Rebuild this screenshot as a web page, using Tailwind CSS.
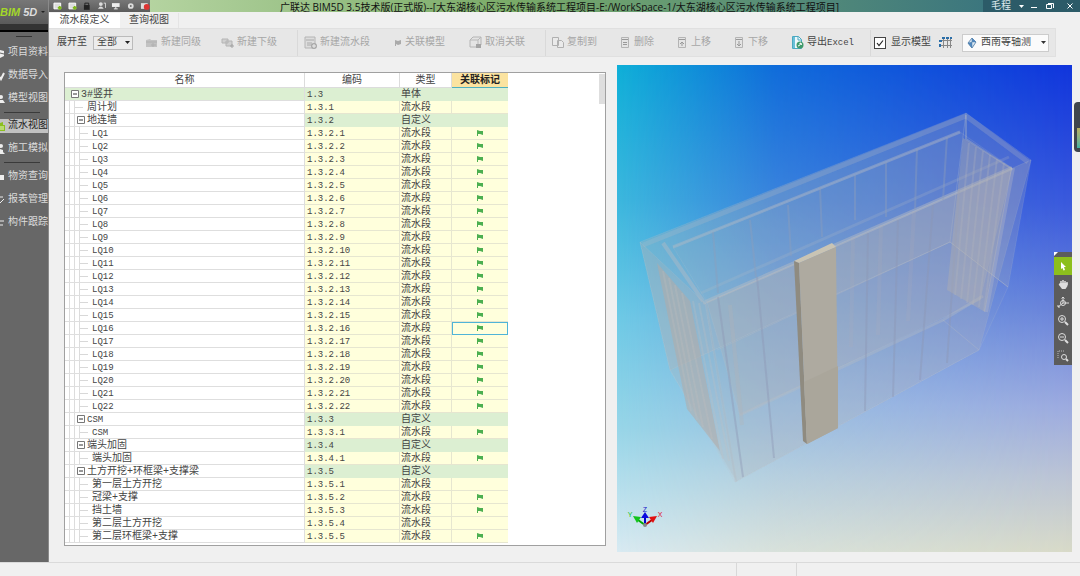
<!DOCTYPE html>
<html lang="zh-CN">
<head>
    <meta charset="UTF-8">
    <meta name="viewport" content="width=device-width, initial-scale=1.0">
    <title>广联达 BIM5D 3.5技术版</title>
    <script src="https://cdn.jsdelivr.net/npm/@tailwindcss/browser@4"></script>
</head>
<body class="bg-[#f0f0f0] font-['Liberation_Mono','Noto_Sans_CJK_SC',monospace] text-[10px] leading-3 text-[#444]">
    <div class="min-h-screen flex flex-col">
        <div class="flex-1 flex">

            <!-- 左侧导航 -->
            <aside class="w-12 shrink-0 overflow-hidden bg-[#676767] text-[#dcdcdc]">
                <div class="h-6 flex items-center gap-1 bg-linear-to-b from-[#777] to-[#5a5a5a] font-['Liberation_Sans',sans-serif] text-[11px] font-bold italic">
                    <span class="whitespace-nowrap"><span class="text-[#a4d82a]">BIM</span> <span class="text-[#ddd]">5D</span></span>
                    <svg class="w-1 h-1 shrink-0" viewBox="0 0 4 4"><path d="M0 1h4L2 3z" fill="#222"/></svg>
                </div>
                <div class="h-2 bg-[#333] border-b-2 border-black"></div>
                <div class="mx-4 mt-1 border-t border-[#333]"></div>
                <nav class="pt-1">
                    <a href="#" class="h-[23px] flex items-center gap-[3px] whitespace-nowrap">
                        <svg class="w-[5px] h-3 shrink-0" viewBox="0 0 5 12"><path d="M0 3l4 1v5l-4 2z" fill="#eee"/><path d="M0 6l4 1" stroke="#666"/></svg>项目资料</a>
                    <a href="#" class="h-[23px] flex items-center gap-[3px] whitespace-nowrap">
                        <svg class="w-[5px] h-3 shrink-0" viewBox="0 0 5 12"><path d="M0 7l1 2 3-6" fill="none" stroke="#eee" stroke-width="2"/></svg>数据导入</a>
                    <a href="#" class="h-[23px] flex items-center gap-[3px] whitespace-nowrap">
                        <svg class="w-[5px] h-3 shrink-0" viewBox="0 0 5 12"><circle cx="1" cy="4" r="2" fill="#eee"/><path d="M0 7h3l2 3H0z" fill="#eee"/></svg>模型视图</a>
                    <div class="ml-1 mr-2 my-[2px] border-t border-[#3a3a3a]"></div>
                    <a href="#" class="h-[14px] my-[6px] flex items-center gap-[3px] whitespace-nowrap bg-[#c2c2c2] text-[#222]">
                        <svg class="w-[5px] h-3 shrink-0" viewBox="0 0 5 12"><path d="M0 3l3-1v3h2v6H0z" fill="#8bbf1f"/><path d="M1 6v4M3 6v4" stroke="#e8f5c8"/></svg>流水视图</a>
                    <a href="#" class="h-[19px] flex items-center gap-[3px] whitespace-nowrap">
                        <svg class="w-[5px] h-3 shrink-0" viewBox="0 0 5 12"><circle cx="1" cy="3" r="2" fill="#eee"/><path d="M0 6l3 1v2l2 2H0z" fill="#eee"/></svg>施工模拟</a>
                    <div class="ml-1 mr-2 mt-1 mb-[2px] border-t border-[#3a3a3a]"></div>
                    <a href="#" class="h-[23px] flex items-center gap-[3px] whitespace-nowrap">
                        <svg class="w-[5px] h-3 shrink-0" viewBox="0 0 5 12"><path d="M0 4h4v5H0z" fill="#eee"/></svg>物资查询</a>
                    <a href="#" class="h-[23px] flex items-center gap-[3px] whitespace-nowrap">
                        <svg class="w-[5px] h-3 shrink-0" viewBox="0 0 5 12"><path d="M0 3h3M0 9l4-4" stroke="#eee" fill="none"/></svg>报表管理</a>
                    <a href="#" class="h-[23px] flex items-center gap-[3px] whitespace-nowrap">
                        <svg class="w-[5px] h-3 shrink-0" viewBox="0 0 5 12"><path d="M0 4h4M0 8h3" stroke="#eee" fill="none"/></svg>构件跟踪</a>
                </nav>
            </aside>

            <div class="flex-1 min-w-0 flex flex-col border-l border-[#8a8a8a]">

                <!-- 标题栏 -->
                <header class="h-3 flex items-center bg-linear-to-r from-[#c5dfb0] via-[#7aab68] via-45% to-[#2f6b80] overflow-hidden">
                    <div class="w-[101px] h-3 shrink-0 flex items-center gap-[5px] pl-1 bg-linear-to-b from-[#777] to-[#5c5c5c]">
                        <svg class="w-[10px] h-[10px]" viewBox="0 0 10 10"><path d="M1 2h7v6H1z" fill="#ddd" stroke="#fff"/><path d="M5 7h4M7 5v4" stroke="#7db81a" stroke-width="2"/></svg>
                        <svg class="w-[10px] h-[10px]" viewBox="0 0 10 10"><path d="M1 2h7v6H1z" fill="#ddd" stroke="#fff"/><path d="M5 7h4M7 5v4" stroke="#7db81a" stroke-width="2"/></svg>
                        <svg class="w-[10px] h-[10px]" viewBox="0 0 10 10"><path d="M2 4h6v5H2z" fill="#222"/><path d="M3 4V2h4v2" fill="none" stroke="#222"/></svg>
                        <svg class="w-[10px] h-[10px]" viewBox="0 0 10 10"><circle cx="4" cy="3" r="2" fill="#ddd"/><path d="M1 8q3-5 6 0z" fill="#ddd"/><path d="M7 2h2v5" stroke="#ddd" fill="none"/></svg>
                        <svg class="w-[10px] h-[10px]" viewBox="0 0 10 10"><path d="M1 2h8v4H1z" fill="#eee"/><path d="M3 8h4M5 6v2" stroke="#eee"/></svg>
                        <svg class="w-[10px] h-[10px]" viewBox="0 0 10 10"><circle cx="5" cy="5" r="2" fill="none" stroke="#ddd" stroke-width="2"/></svg>
                        <svg class="w-[10px] h-[10px]" viewBox="0 0 10 10"><path d="M1 2h7v6H1z" fill="#ddd"/><circle cx="7" cy="6" r="3" fill="#d33"/></svg>
                    </div>
                    <h1 class="flex-1 pt-px pr-3.5 text-center whitespace-nowrap text-[#111] font-['Open_Sans','Noto_Sans_CJK_SC',sans-serif]">广联达 BIM5D 3.5技术版(正式版)--[大东湖核心区污水传输系统工程项目-E:/WorkSpace-1/大东湖核心区污水传输系统工程项目]</h1>
                    <div class="w-[97px] h-3 shrink-0 flex items-center pl-2 bg-[#2c5b68] text-[#dce8ec]">
                        <span class="pt-px">毛程</span>
                        <svg class="ml-2 w-[5px] h-[5px]" viewBox="0 0 5 5"><path d="M0 1h5L2.500 4z" fill="#fff"/></svg>
                        <button type="button" aria-label="最小化" class="ml-[6px]"><svg class="w-2 h-2" viewBox="0 0 8 8"><path d="M1 5.500h6" stroke="#fff"/></svg></button>
                        <button type="button" aria-label="还原" class="ml-2"><svg class="w-2 h-2" viewBox="0 0 8 8"><path d="M.5 2.500h5v4h-5zM2 1.500h5.500V6" fill="none" stroke="#fff"/></svg></button>
                        <button type="button" aria-label="关闭" class="ml-3"><svg class="w-2 h-2" viewBox="0 0 8 8"><path d="M1.500 1.500l5 5M6.500 1.500l-5 5" stroke="#fff" fill="none"/></svg></button>
                    </div>
                </header>

                <!-- 页签 -->
                <div class="flex pt-px">
                    <button type="button" class="w-[71px] h-[15px] bg-white">流水段定义</button>
                    <button type="button" class="w-[59px] h-[15px] border-r border-[#e4e4e4]">查询视图</button>
                </div>

                <!-- 工具栏 -->
                <div class="h-[29px] flex items-center pl-2 mr-6 border border-l-0 border-[#e0e0e0] bg-[#e7e7e7] text-[#a6a6a6] whitespace-nowrap">
                    <label for="level" class="text-[#444]">展开至</label>
                    <div class="relative ml-[6px]">
                        <select id="level" class="block appearance-none w-10 h-[14px] pl-[3px] border border-[#bbb] bg-[#ececec] text-[#444]">
                            <option>全部</option>
                        </select>
                        <svg class="absolute right-[3px] top-1 w-[5px] h-[5px] pointer-events-none" viewBox="0 0 5 5"><path d="M0 1h5L2.500 4z" fill="#222"/></svg>
                    </div>
                    <div class="flex gap-5 ml-3 pr-5">
                        <button type="button" class="flex items-center gap-[3px]">
                            <svg class="w-[13px] h-[13px]" viewBox="0 0 13 13"><path d="M1 4l4-1 1 1h6v7H1z" fill="#c2c2c2"/><path d="M1 6h11M8 7v4M6 9h5" stroke="#b0b0b0"/></svg>新建同级</button>
                        <button type="button" class="flex items-center gap-[3px]">
                            <svg class="w-[13px] h-[13px]" viewBox="0 0 13 13"><path d="M1 3h6v4H1zM5 5h6v5H5z" fill="#d0d0d0" stroke="#b4b4b4"/><path d="M9 10h4M11 8v4" stroke="#a4a4a4"/></svg>新建下级</button>
                    </div>
                    <div class="h-[26px] flex items-center gap-6 border-l border-[#d9d9d9] pl-[6px] pr-5">
                        <button type="button" class="flex items-center gap-[3px]">
                            <svg class="w-[13px] h-[13px]" viewBox="0 0 13 13"><path d="M1 1h10v11H1z" fill="#ddd" stroke="#b4b4b4"/><path d="M2 4h8M3 7h5M3 9h5" stroke="#aaa"/><circle cx="10" cy="10" r="3" fill="#a8a8a8"/><path d="M8 10h4M10 8v4" stroke="#eee"/></svg>新建流水段</button>
                        <button type="button" class="flex items-center gap-[3px]">
                            <svg class="w-2 h-[13px]" viewBox="0 0 8 13"><path d="M1 4l3 1 3-1v4L4 9 2 8v2H1z" fill="#aaa"/></svg>关联模型</button>
                        <button type="button" class="flex items-center gap-[3px]">
                            <svg class="w-[13px] h-[13px]" viewBox="0 0 13 13"><path d="M1 4l3-3h8v8l-3 2H1z" fill="#e4e4e4" stroke="#b4b4b4"/><path d="M1 4h8v7M9 4l3-3" fill="none" stroke="#b8b8b8"/><path d="M7 8h5v4H7z" fill="#a4a4a4"/></svg>取消关联</button>
                    </div>
                    <div class="h-[26px] flex items-center gap-6 border-l border-[#d9d9d9] pl-[6px] pr-4">
                        <button type="button" class="flex items-center gap-[3px]">
                            <svg class="w-3 h-[13px]" viewBox="0 0 12 13"><path d="M.5 1.500h6v8h-6zM5.500 4.500h4l2 2v5h-6z" fill="#eaeaea" stroke="#b0b0b0"/></svg>复制到</button>
                        <button type="button" class="flex items-center gap-[5px]">
                            <svg class="w-2 h-[13px]" viewBox="0 0 8 13"><path d="M.5 1.500h7v10h-7z" fill="#e4e4e4" stroke="#b4b4b4"/><path d="M1 3.500h6M2 6.500h4M2 8.500h4" stroke="#999"/></svg>删除</button>
                        <button type="button" class="flex items-center gap-[5px]">
                            <svg class="w-2 h-[13px]" viewBox="0 0 8 13"><path d="M.5 1.500h7v10h-7z" fill="#e4e4e4" stroke="#b4b4b4"/><path d="M1 3.500h6M4 10V6M2 8l2-2 2 2" fill="none" stroke="#999"/></svg>上移</button>
                        <button type="button" class="flex items-center gap-[5px]">
                            <svg class="w-2 h-[13px]" viewBox="0 0 8 13"><path d="M.5 1.500h7v10h-7z" fill="#e4e4e4" stroke="#b4b4b4"/><path d="M1 3.500h6M4 5v4M2 8l2 2 2-2" fill="none" stroke="#999"/></svg>下移</button>
                        <button type="button" class="flex items-center gap-[3px] text-[#444]">
                            <svg class="w-3 h-[13px]" viewBox="0 0 12 13"><path d="M.5.500h6l3 3v9h-9z" fill="#eef8fb" stroke="#4aa8c0"/><path d="M1 1h2v11H1z" fill="#69c0d8"/><path d="M6 .5v3.500h3.500" fill="none" stroke="#4aa8c0"/><circle cx="8" cy="9" r="3.500" fill="#3f9a6a"/><path d="M6 10q2 0 3-3M7.500 7.500L9 7l.5 2" stroke="#fff" fill="none"/></svg>
                            <span>导出<span class="text-[9px]">Excel</span></span></button>
                    </div>
                    <div class="h-[26px] flex items-center border-l border-[#d9d9d9] pl-[3px] text-[#444]">
                        <div class="relative">
                            <input id="showModel" type="checkbox" checked class="block appearance-none w-3 h-3 border border-[#444] bg-white">
                            <svg class="absolute inset-0 w-3 h-3 pointer-events-none" viewBox="0 0 12 12"><path d="M3 6l2 2.500 4-5" fill="none" stroke="#222" stroke-width="1.200"/></svg>
                        </div>
                        <label for="showModel" class="ml-[5px]">显示模型</label>
                        <button type="button" aria-label="轴网" class="ml-2"><svg class="block w-[13px] h-[13px]" viewBox="0 0 13 13"><path d="M2 4.500h11M1 9.500h12M4.500 2v10M8.500 2v10M11.500 2v10" stroke="#888"/><path d="M3 1h3v2H3zM7 1h3v2H7zM11 1h2v2h-2zM0 4h3v2H0zM0 8h2v3H0z" fill="#2b6ea8"/></svg></button>
                        <div class="relative ml-[10px]">
                            <select aria-label="视角" class="block appearance-none w-[87px] h-[18px] pl-[18px] border border-[#ccc] bg-[#fbfbfb] text-[#444]">
                                <option>西南等轴测</option>
                            </select>
                            <svg class="absolute left-1 top-[3px] w-3 h-3 pointer-events-none" viewBox="0 0 12 12"><path d="M6 1l4 4-4 6-4-5z" fill="#dce9f4" stroke="#6a90b4"/><path d="M2 6l4-1v6zM6 1v4l4 0" fill="#4f88c0" stroke="#5580a8" stroke-width=".5"/></svg>
                            <svg class="absolute right-[3px] top-[6px] w-[5px] h-[5px] pointer-events-none" viewBox="0 0 5 5"><path d="M0 1h5L2.500 4z" fill="#333"/></svg>
                        </div>
                    </div>
                </div>

                <main class="relative flex-1 flex items-stretch gap-[11px] pl-[15px] pr-2 pt-2 pb-[10px]">
                    <!-- 流水段列表 -->
                    <section class="w-[542px] shrink-0 mt-[7px] mb-[6px] flex justify-between border border-[#a0a0a0] bg-white overflow-hidden">
                        <table class="table-fixed w-[443px] self-start border-separate border-spacing-0">
                            <thead>
                                <tr class="h-[15px]">
                                    <th class="w-[240px] p-0 pt-[2px] font-normal border-r border-b border-[#dcdcdc]">名称</th>
                                    <th class="w-[95px] p-0 pt-[2px] font-normal border-r border-b border-[#dcdcdc]">编码</th>
                                    <th class="w-[52px] p-0 pt-[2px] font-normal border-r border-b border-[#dcdcdc]">类型</th>
                                    <th class="w-[56px] p-0 pt-[2px] font-bold bg-[#fbe3a0] border-b border-[#4fb0c0] text-[#222]">关联标记</th>
                                </tr>
                            </thead>
                            <tbody id="rows"></tbody>
                        </table>
                        <div class="w-[6px] h-[30px] mt-px bg-[#dedede]"></div>
                    </section>

                    <!-- 三维视图 -->
                    <section class="relative flex-1 overflow-hidden bg-[linear-gradient(to_bottom,#0fb0d8,#3cb8de_28%,#6ecae6_52%,#98d6e8_75%,#d8eaf2)]">
                        <div class="absolute inset-0 bg-[linear-gradient(to_bottom,#1034dc,#3a58dc_28%,#6a82da_50%,#9caadf_70%,#bcc4d4_85%,#d8dac8)] [mask-image:linear-gradient(to_right,transparent,rgb(0_0_0/.55)_35%,black)]"></div>
                        <svg class="absolute inset-0 w-full h-full" viewBox="0 0 455 487" preserveAspectRatio="xMidYMid slice">
                            <!-- 外轮廓 -->
                            <g fill="#b4b4b6" stroke="#c4c8d0" stroke-opacity=".15">
                                <path d="M23 177L349 48 333 177 53 305z" fill-opacity=".28"/>
                                <path d="M349 48l65 47-23 127-58-45z" fill-opacity=".22"/>
                                <path d="M23 177l67 63 30 177-67-112z" fill-opacity=".24"/>
                                <path d="M88 238L414 95 362 285 118 417z" fill-opacity=".24"/>
                                <path d="M56 182L343 67l52 36L90 237z" fill-opacity=".06"/>
                                <path d="M90 237L395 103 363 235 123 350z" fill-opacity=".3"/>
                                <path d="M53 305L333 177l58 45-29 63-244 132z" fill-opacity=".06"/>
                            </g>
                            <!-- 冠梁 -->
                            <g fill="none" stroke="#b8bcc4">
                                <path d="M26 180L349 51l62 46" stroke-opacity=".25" stroke-width="5"/>
                                <path d="M56 182L343 67" stroke-opacity=".4" stroke-width="3"/>
                                <path d="M86 238L395 103" stroke-opacity=".45" stroke-width="4"/>
                                <path d="M84 228L392 92" stroke-opacity=".2" stroke-width="3"/>
                                <path d="M46 178l40 58" stroke-opacity=".4" stroke-width="4"/>
                                <path d="M349 50v24l46 30" stroke-opacity=".35" stroke-width="2"/>
                                <path d="M123 350L326 255l40-24" stroke-opacity=".35" stroke-width="3"/>
                                <path d="M326 255l36 30M333 177l58 45M100 285L333 177" stroke-opacity=".3"/>
                            </g>
                            <!-- 墙段接缝 -->
                            <g fill="none" stroke="#8e9db8" stroke-opacity=".4" stroke-width="2">
                                <path d="M96 167l5 61M133 155l6 57M171 140l3 51M203 122l2 50M238 110v45M269 97v55M300 83l-2 62M330 72l-4 63"/>
                                <path d="M101 232l25 180M140 212l17 181M251 168l-3 178M281 155l-5 177M316 140l-13 175M342 124l-12 174" stroke="#8c96b4"/>
                                <path d="M236 172l-2 110M264 160l-3 110M297 146l-6 110" stroke="#b4aeb4" stroke-width="4" stroke-opacity=".15"/>
                                <path d="M113 240l12 120" stroke="#b4b4b6" stroke-width="4" stroke-opacity=".3"/>
                            </g>
                            <!-- 端部桩 -->
                            <path d="M346 73l49 30-27 144-38-22z" fill="#b2b0b0" fill-opacity=".4"/>
                            <path d="M352 78l-14 152M359 82l-15 152M366 86l-16 152M373 90l-17 150M380 94l-18 148M387 98l-20 148" stroke="#b8b8bc" stroke-opacity=".25" stroke-width="2"/>
                            <path d="M396 103l-27 144" stroke="#c0c0c8" stroke-opacity=".3" stroke-width="4"/>
                            <path d="M40 198l33 38 30 150-33-42z" fill="#b2aca8" fill-opacity=".55"/>
                            <path d="M76 236l30 158M82 238l30 158M46 206l28 140M52 213l28 142M58 220l28 142M65 228l30 146" stroke="#c2c0c0" stroke-opacity=".25" stroke-width="2"/>
                            <!-- 选中墙段 -->
                            <path d="M177 196l38-18 4 4-37 16z" fill="#c9c4b4"/>
                            <path d="M177 196l5 2 8 181-4-3z" fill="#8f8b80"/>
                            <path d="M182 198l37-16 2 181-31 16z" fill="#aeaaa0"/>
                            <path d="M187 317l34-16v62l-31 16z" fill="#aaa69b"/>
                            <!-- 坐标轴 -->
                            <g stroke-width="2">
                                <path d="M28 460l-7-5" stroke="#0a0"/><path d="M16 451l8 1-4 6z" fill="#12c41c"/>
                                <path d="M28 460l7-5" stroke="#b00"/><path d="M40 451l-8 1 4 6z" fill="#e01010"/>
                                <path d="M28 460v-7" stroke="#00c"/><path d="M28 447l4 6h-8z" fill="#0a0ae0"/>
                                <circle cx="28" cy="460" r="2" fill="#888"/>
                            </g>
                            <g class="font-['Liberation_Sans',sans-serif] text-[7px]" text-anchor="middle">
                                <text x="13" y="452" fill="#12c41c">Y</text>
                                <text x="28" y="447" fill="#1414c8">Z</text>
                                <text x="43" y="452" fill="#e01030">X</text>
                            </g>
                        </svg>

                        <!-- 视图工具 -->
                        <div class="absolute right-0 top-[187px] w-[18px] bg-[#5c5c5c] pt-[5px]">
                            <svg class="absolute left-0 top-0 w-1 h-1" viewBox="0 0 4 4"><path d="M0 0h4L0 4z" fill="#fff"/></svg>
                            <button type="button" aria-label="选择" class="w-[18px] h-[18px] flex items-center justify-center bg-[#8cbf1c]"><svg class="w-3 h-3" viewBox="0 0 12 12"><path d="M4 2l5 5H7l1 3-1.500.5L5.500 8 4 9z" fill="#fff"/></svg></button>
                            <button type="button" aria-label="平移" class="w-[18px] h-[18px] flex items-center justify-center"><svg class="w-3 h-3" viewBox="0 0 12 12"><path d="M2 6l2 1V3M6 6V2M8 6V3M10 7V4" stroke="#ddd" stroke-width="1.500" fill="none"/><path d="M3.500 5h7v3l-2 3H5L2 7z" fill="#ddd"/></svg></button>
                            <button type="button" aria-label="旋转" class="w-[18px] h-[18px] flex items-center justify-center"><svg class="w-3 h-3" viewBox="0 0 12 12"><circle cx="6" cy="7" r="2.500" fill="none" stroke="#ddd"/><path d="M6 7V1M6 7h6M6 7l-5 4M4.500 2.500L6 1l1.500 1.500M1 9v2h2" fill="none" stroke="#ddd"/></svg></button>
                            <button type="button" aria-label="放大" class="w-[18px] h-[18px] flex items-center justify-center"><svg class="w-3 h-3" viewBox="0 0 12 12"><circle cx="5" cy="5" r="3.500" fill="none" stroke="#ddd"/><path d="M3 5h4M5 3v4" stroke="#ddd"/><path d="M8 8l3 3" stroke="#ddd" stroke-width="2"/></svg></button>
                            <button type="button" aria-label="缩小" class="w-[18px] h-[18px] flex items-center justify-center"><svg class="w-3 h-3" viewBox="0 0 12 12"><circle cx="5" cy="5" r="3.500" fill="none" stroke="#ddd"/><path d="M3 5h4" stroke="#ddd"/><path d="M8 8l3 3" stroke="#ddd" stroke-width="2"/></svg></button>
                            <button type="button" aria-label="框选缩放" class="w-[18px] h-[18px] flex items-center justify-center"><svg class="w-3 h-3" viewBox="0 0 12 12"><path d="M1 8V1h7" fill="none" stroke="#bbb" stroke-dasharray="1 1"/><circle cx="7" cy="7" r="2.500" fill="none" stroke="#ddd"/><path d="M9 9l2 2" stroke="#ddd" stroke-width="2"/></svg></button>
                        </div>
                    </section>

                    <!-- 侧边悬浮条 -->
                    <div class="absolute right-0 top-[45px] w-[6px] h-[50px] rounded-l-sm bg-[#40464e] pl-[3px] pt-[26px] pb-1">
                        <div class="h-full bg-linear-to-b from-[#b8b060] to-[#3fb0a0]"></div>
                    </div>
                </main>
            </div>
        </div>

        <!-- 状态栏 -->
        <footer class="h-[14px] flex border-t border-[#dadada] bg-[#f0f0f0]">
            <div class="flex-1"></div>
            <div class="w-[60px] border-l border-[#d8d8d8]"></div>
            <div class="w-[284px] border-l border-[#d8d8d8]"></div>
        </footer>
    </div>

    <script>
        // [层级, 名称, 编码, 类型, 是否关联]
        const data = [
            [0, '3#竖井', '1.3', '单体', 0],
            [1, '周计划', '1.3.1', '流水段', 0],
            [1, '地连墙', '1.3.2', '自定义', 0],
        ];
        for (let i = 1; i <= 22; i++) {
            data.push([2, 'LQ' + i, '1.3.2.' + i, '流水段', 1]);
        }
        data.push(
            [1, 'CSM', '1.3.3', '自定义', 0],
            [2, 'CSM', '1.3.3.1', '流水段', 1],
            [1, '端头加固', '1.3.4', '自定义', 0],
            [2, '端头加固', '1.3.4.1', '流水段', 1],
            [1, '土方开挖+环框梁+支撑梁', '1.3.5', '自定义', 0],
            [2, '第一层土方开挖', '1.3.5.1', '流水段', 0],
            [2, '冠梁+支撑', '1.3.5.2', '流水段', 1],
            [2, '挡土墙', '1.3.5.3', '流水段', 1],
            [2, '第二层土方开挖', '1.3.5.4', '流水段', 0],
            [2, '第二层环框梁+支撑', '1.3.5.5', '流水段', 1]
        );

        const box = '<svg class="w-2 h-2 shrink-0 mr-[2px]" viewBox="0 0 8 8"><path d="M.5.5h7v7h-7z" fill="#fff" stroke="#777"/><path d="M2 4h4" stroke="#333"/></svg>';
        const flag = '<svg class="block mx-auto w-2 h-2" viewBox="0 0 8 8"><path d="M1 1l3 1 3 0v4L4 5 2 5v2H1z" fill="#4caf50"/></svg>';
        const dash = '<span class="w-2 mr-1 shrink-0 border-t border-[#d8d8d8]"></span>';
        const guide = '<span class="w-[5px] h-3 shrink-0 border-r border-[#dcdcdc]"></span>';

        document.getElementById('rows').innerHTML = data.map(([level, name, code, type, linked]) => {
            const parent = type !== '流水段';
            const bg = parent ? 'bg-[#dcefd2]' : 'bg-[#ffffdc]';
            const line = parent ? 'border-[#dcefd2]' : 'border-[#e6e6d0]';
            const nameBg = level === 0 ? 'bg-[#dcefd2]' : 'bg-white';
            const size = /^[A-Z0-9]+$/.test(name) ? 'text-[9px]' : 'text-[10px]';
            const indent = level === 0 ? '<span class="w-[6px]"></span>'
                : level === 1 ? guide + guide + (parent ? '<span class="w-[2px]"></span>' : '')
                : guide + guide + guide;
            const selected = code === '1.3.2.16' ? 'outline outline-[#4fb4d8] -outline-offset-1' : '';
            return `<tr>
                <td class="p-0 border-r border-b border-[#dedede] ${nameBg}">
                    <div class="h-3 flex items-center whitespace-nowrap leading-[10px] ${size}">${indent}${parent ? box : dash}<span class="pt-[2px]">${name}</span></div>
                </td>
                <td class="p-0 pt-[2px] pl-[2px] border-r border-b ${line} ${bg} text-[9px] leading-[10px]">${code}</td>
                <td class="p-0 pt-[2px] pl-px border-r border-b ${line} ${bg} leading-[10px]">${type}</td>
                <td class="p-0 border-b ${line} ${bg} ${selected}">${linked ? flag : ''}</td>
            </tr>`;
        }).join('');
    </script>
</body>
</html>
